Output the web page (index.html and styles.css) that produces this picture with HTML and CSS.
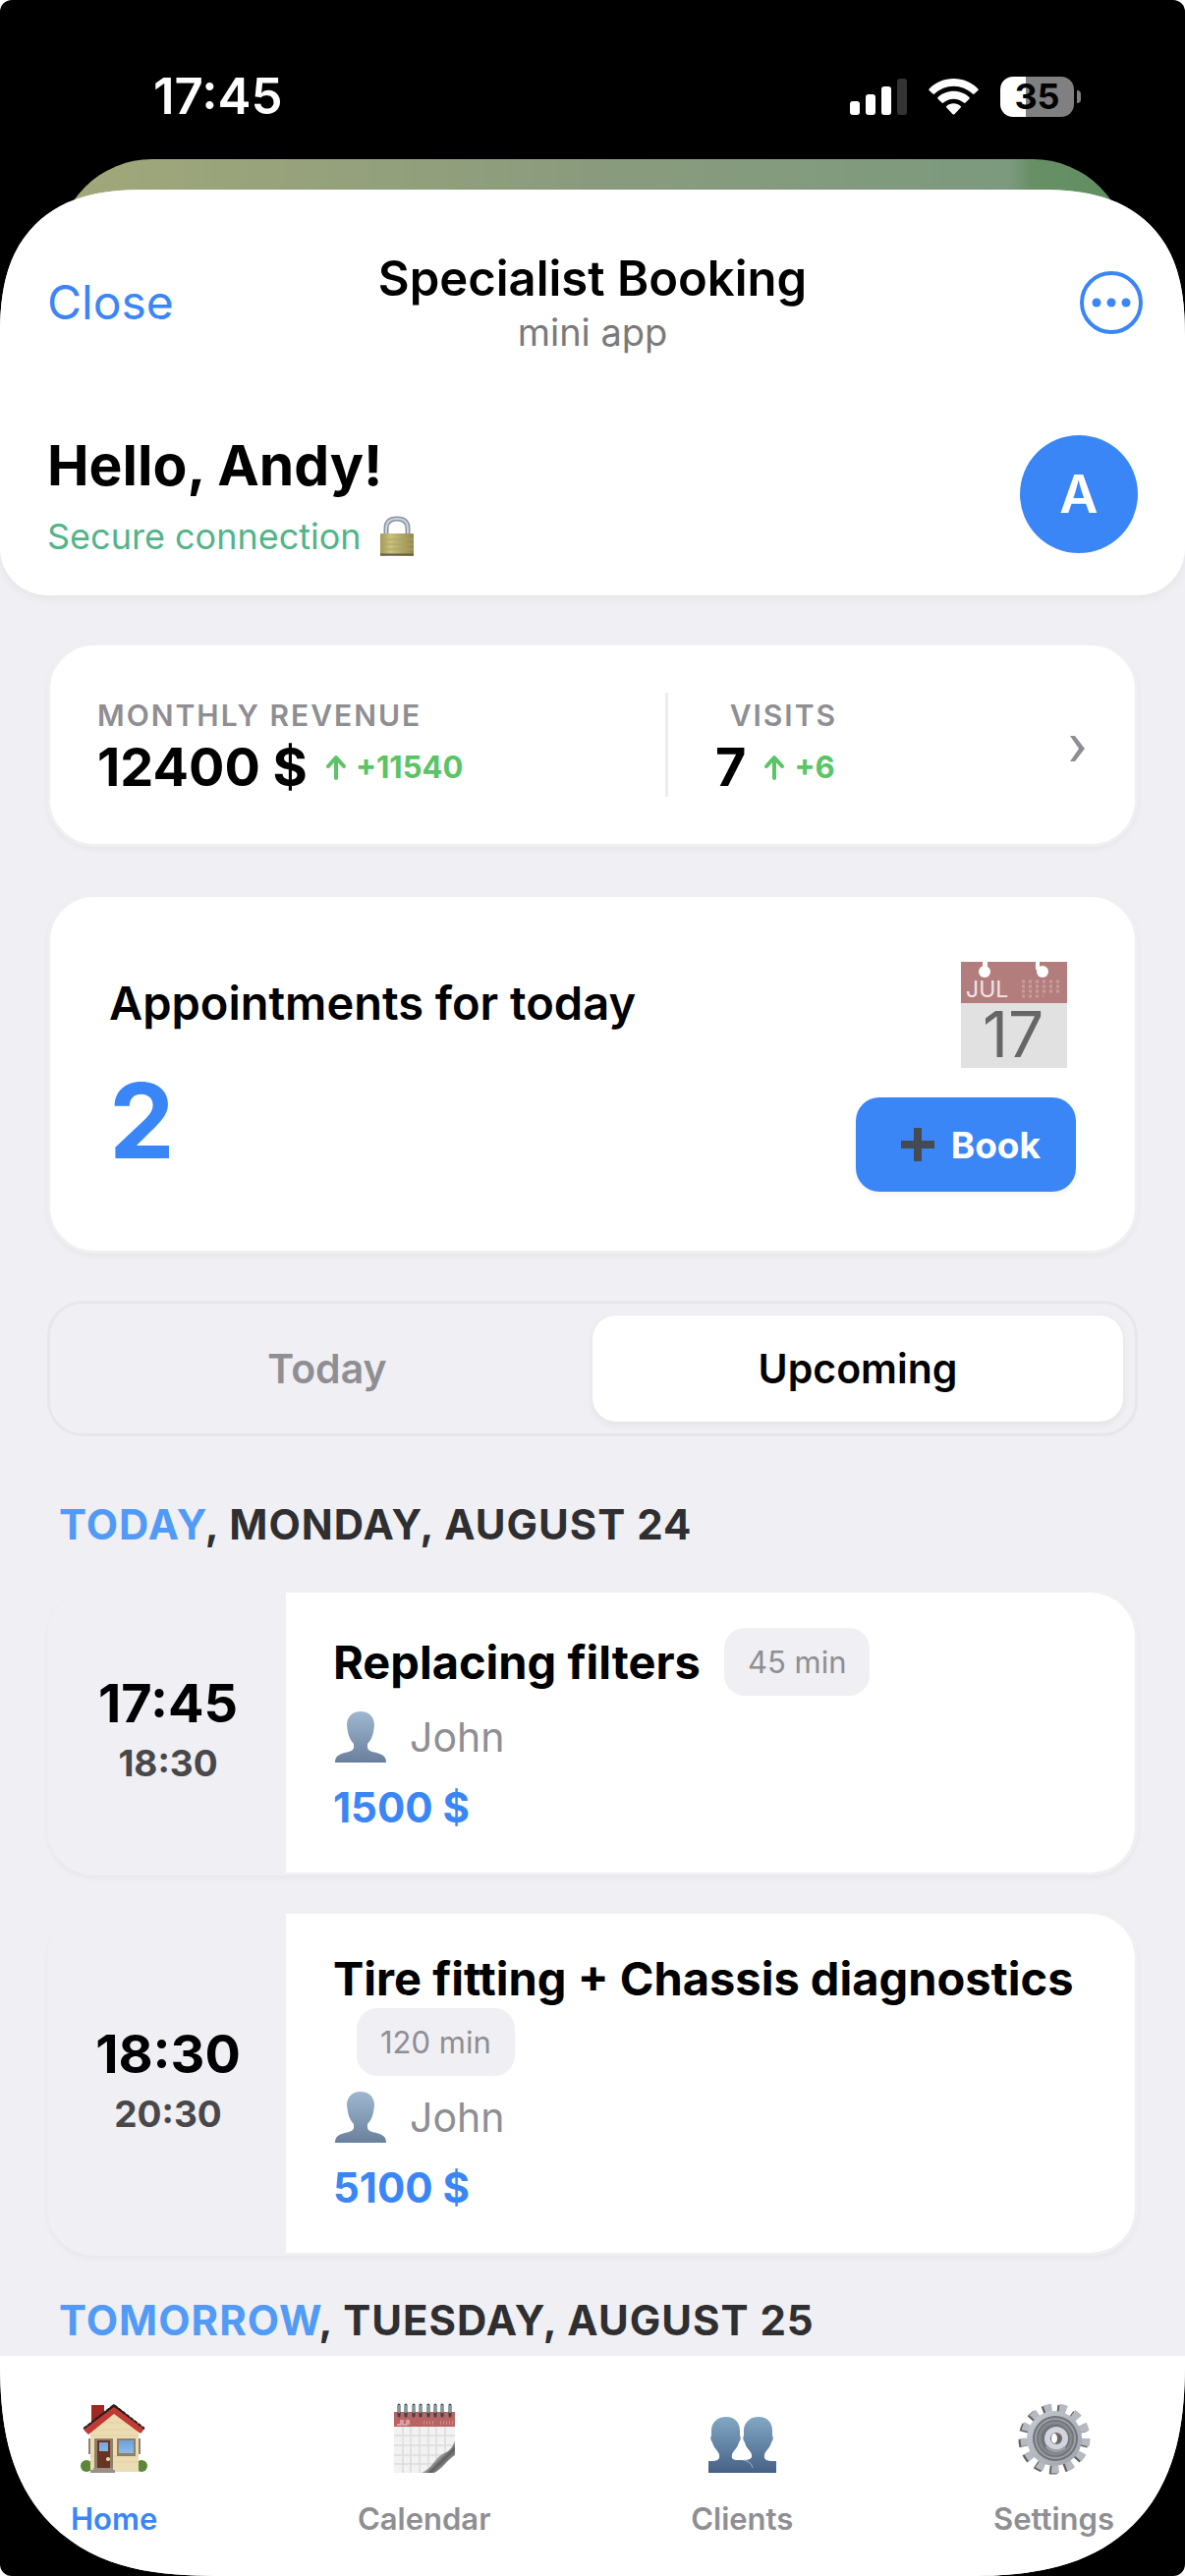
FILE: index.html
```html
<!DOCTYPE html>
<html lang="en">
<head>
<meta charset="utf-8">
<meta name="viewport" content="width=device-width, initial-scale=1">
<title>Specialist Booking</title>
<link rel="stylesheet" href="styles.css">
</head>
<body>
<!-- Shared icon definitions -->
<svg class="defs" width="0" height="0" aria-hidden="true">
  <defs>
    <linearGradient id="bust-fill" x1="0" y1="0" x2="0" y2="1">
      <stop offset="0" stop-color="#9fb8d0"/><stop offset="1" stop-color="#6a7f9c"/>
    </linearGradient>
    <linearGradient id="busts-fill" gradientUnits="userSpaceOnUse" x1="0" y1="14" x2="0" y2="72">
      <stop offset="0" stop-color="#82a8c4"/><stop offset="1" stop-color="#455f85"/>
    </linearGradient>
    <linearGradient id="brass" x1="0" y1="0" x2="1" y2="0">
      <stop offset="0" stop-color="#a29a58"/><stop offset=".3" stop-color="#c9c17c"/><stop offset="1" stop-color="#958b50"/>
    </linearGradient>
    <linearGradient id="steel" x1="0" y1="0" x2="1" y2="1">
      <stop offset="0" stop-color="#c5c9d2"/><stop offset="1" stop-color="#9fa2a8"/>
    </linearGradient>
    <linearGradient id="glass" x1="0" y1="0" x2="0" y2="1">
      <stop offset="0" stop-color="#6fa0da"/><stop offset="1" stop-color="#8bbcea"/>
    </linearGradient>
    <linearGradient id="curl" x1="0" y1="0" x2="1" y2="1">
      <stop offset="0" stop-color="#fafafa"/><stop offset=".45" stop-color="#d5d5d5"/><stop offset=".62" stop-color="#5e5e5e"/><stop offset="1" stop-color="#ffffff"/>
    </linearGradient>
    <symbol id="bust" viewBox="0 0 54 54">
      <path fill="url(#bust-fill)" d="M27 1c9 0 14 6 14 14l-1 7c-1 5-3 9-6 12v4c1 3 4 4 9 5 7 2 10 4 10 10H1c0-6 3-8 10-10 5-1 8-2 9-5v-4c-3-3-5-7-6-12l-1-7C13 7 18 1 27 1z"/>
    </symbol>
  </defs>
</svg>

<div class="phone">
  <div class="status">
    <time class="status__time">17:45</time>
    <div class="status__icons">
      <svg width="58" height="37" viewBox="0 0 58 37" aria-label="Signal">
        <g fill="#fff"><rect y="23" width="10" height="14" rx="3"/><rect x="16" y="16" width="10" height="21" rx="3"/><rect x="32" y="8" width="10" height="29" rx="3"/></g>
        <rect x="48" width="10" height="37" rx="3" fill="#333"/>
      </svg>
      <svg width="51" height="37" viewBox="0 0 51 37" aria-label="Wi-Fi" fill="#fff">
        <path d="M25.500 0C35 0 44 4 50.400 10.400q.800.800 0 1.600L46.500 15.600q-.800.800-1.600 0C39.500 10.600 32.800 7.800 25.500 7.800S11.500 10.600 6.100 15.600q-.800.800-1.600 0L.600 12q-.800-.800 0-1.600C7 4 16 0 25.500 0z"/>
        <path d="M25.500 12.800c6.200 0 11.700 2.300 15.900 6.200q.900.800 0 1.700l-3.900 3.900q-.800.800-1.700 0a15.400 15.400 0 0 0-20.600 0q-.900.800-1.700 0L9.600 20.700q-.900-.900 0-1.700c4.200-3.900 9.700-6.200 15.900-6.200z"/>
        <path d="M25.500 25.300c2.700 0 5.200 1 7.100 2.600q1 .800.100 1.700l-6.300 6.700q-.900.900-1.800 0l-6.300-6.700q-.900-.900.100-1.700c1.900-1.600 4.400-2.600 7.100-2.600z"/>
      </svg>
      <span class="battery"><span class="battery__body">35</span><span class="battery__tip"></span></span>
    </div>
  </div>
  <div class="backdrop"></div>

  <div class="sheet">
    <header class="header">
      <div class="topbar">
        <button class="topbar__close" type="button">Close</button>
        <div class="topbar__titles">
          <h1 class="topbar__title">Specialist Booking</h1>
          <p class="topbar__subtitle">mini app</p>
        </div>
        <button class="topbar__more" type="button" aria-label="More">
          <svg width="66" height="66" viewBox="0 0 66 66"><circle cx="33" cy="33" r="30" fill="none" stroke="#3b86f7" stroke-width="4"/><g fill="#3b86f7"><circle cx="18" cy="33" r="4.500"/><circle cx="33" cy="33" r="4.500"/><circle cx="48" cy="33" r="4.500"/></g></svg>
        </button>
      </div>
      <div class="greeting">
        <div>
          <h2 class="greeting__title">Hello, Andy!</h2>
          <p class="greeting__secure">Secure connection
            <svg width="36" height="42" viewBox="0 0 36 42" aria-hidden="true"><path d="M7 20V13C7 6 11 3 18 3s11 3 11 10v7" fill="none" stroke="#8b93a3" stroke-width="5"/><path d="M7 20V13C7 6 11 3 18 3s11 3 11 10v7" fill="none" stroke="#cdd3de" stroke-width="2"/><rect x="1" y="18" width="34" height="23" rx="1" fill="url(#brass)"/><path d="M1 24h34M1 29h34M1 34h34" stroke="#aaa161" stroke-width="1"/><path d="M1 39.500h34" stroke="#655f3c" stroke-width="2"/></svg>
          </p>
        </div>
        <span class="avatar">A</span>
      </div>
    </header>

    <main class="content">
      <a class="card stats" href="#stats">
        <span class="stat">
          <span class="stat__label">MONTHLY REVENUE</span>
          <span class="stat__line"><b class="stat__value">12400 $</b><span class="stat__delta"><svg width="22" height="24" viewBox="0 0 22 24"><path d="M11 23V3M3 11l8-9 8 9"/></svg>+11540</span></span>
        </span>
        <span class="stat stat--visits">
          <span class="stat__label">VISITS</span>
          <span class="stat__line"><b class="stat__value">7</b><span class="stat__delta"><svg width="22" height="24" viewBox="0 0 22 24"><path d="M11 23V3M3 11l8-9 8 9"/></svg>+6</span></span>
        </span>
        <svg class="stats__arrow" width="20" height="28" viewBox="0 0 20 28" aria-hidden="true"><path fill="#8e8e93" d="M2 1h5l10 13L7 27H2l9-13z"/></svg>
      </a>

      <section class="card today">
        <div class="today__info">
          <h2 class="today__title">Appointments for today</h2>
          <p class="today__count">2</p>
        </div>
        <div class="today__side">
          <svg class="today__calendar" width="108" height="108" viewBox="0 0 108 108" aria-hidden="true">
            <path fill="#b37d7d" d="M0 0h108v42H0z"/><path fill="#e1e1e1" d="M0 42h108v66H0z"/>
            <g fill="#fff"><circle cx="24" cy="10" r="6"/><circle cx="83" cy="10" r="6"/><path d="M22 0h5v8h-5zM76 0h4v8h-4z"/></g>
            <text x="5" y="36" class="cal-month">JUL</text>
            <path d="M62 20h42M62 25h42M62 30h42M62 35h22" stroke="#c99c9c" stroke-width="3" stroke-dasharray="3 4" fill="none"/>
            <text x="53" y="97" text-anchor="middle" class="cal-day">17</text>
          </svg>
          <button class="book" type="button">
            <svg width="36" height="36" viewBox="0 0 36 36" aria-hidden="true"><path d="M18 1v34M1 18h34" stroke="#464b53" stroke-width="8"/></svg>Book
          </button>
        </div>
      </section>

      <div class="tabs" role="tablist">
        <button class="tabs__item" type="button" role="tab" aria-selected="false">Today</button>
        <button class="tabs__item tabs__item--active" type="button" role="tab" aria-selected="true">Upcoming</button>
      </div>

      <section class="day day--first">
        <h2 class="day__title"><span>TODAY</span>, MONDAY, AUGUST 24</h2>
        <article class="visit">
          <div class="visit__time"><time class="visit__start">17:45</time><time class="visit__end">18:30</time></div>
          <div class="visit__body">
            <div class="visit__head"><h3 class="visit__title">Replacing filters</h3><span class="badge">45 min</span></div>
            <p class="visit__client"><svg width="56" height="54" aria-hidden="true"><use href="#bust"/></svg>John</p>
            <p class="visit__price">1500 $</p>
          </div>
        </article>
        <article class="visit">
          <div class="visit__time"><time class="visit__start">18:30</time><time class="visit__end">20:30</time></div>
          <div class="visit__body">
            <div class="visit__head"><h3 class="visit__title">Tire fitting + Chassis diagnostics</h3><span class="badge">120 min</span></div>
            <p class="visit__client"><svg width="56" height="54" aria-hidden="true"><use href="#bust"/></svg>John</p>
            <p class="visit__price">5100 $</p>
          </div>
        </article>
      </section>

      <section class="day">
        <h2 class="day__title"><span>TOMORROW</span>, TUESDAY, AUGUST 25</h2>
      </section>
    </main>

    <nav class="nav">
      <a class="nav__item nav__item--active" href="#home">
        <svg width="72" height="72" viewBox="0 0 72 72" aria-hidden="true">
          <circle cx="8" cy="64" r="6" fill="#5d8638"/><circle cx="64" cy="64" r="6" fill="#5d8638"/>
          <path fill="#8b8272" d="M10 36h4v16h-4zM59 36h4v16h-4z"/>
          <path fill="#a02823" d="M13 2h13v20H13z"/>
          <path fill="#ecdcb3" d="M12 25 36 6l25 19v45H12z"/>
          <path stroke="#e2d1a7" d="M22 20h28M15 27h43M12 33h49M12 54h49M12 60h49"/>
          <path fill="#26211f" d="M6 25 36 1l31 25-4 4L36 8 8 28z"/>
          <path fill="#c23a34" d="M5 27 36 4l31 22-4 5-27-20L10 32z"/>
          <path fill="none" stroke="#26211f" stroke-width="2" stroke-dasharray="4 1" d="M5 26 36 2l31 24"/>
          <path fill="#8f7f67" d="M16 36h19v32H16zM39 36h19v18H39z"/>
          <path fill="#6a3424" d="M19 38h13v28H19z"/>
          <path fill="url(#glass)" d="M21 40h9v9h-9zM41 38h15v13H41z"/>
          <circle cx="30" cy="57" r="2" fill="#f3dfb0"/><path fill="#999087" d="M15 66h20v2h2v3H12v-3h3z"/>
        </svg>
        Home
      </a>
      <a class="nav__item" href="#calendar">
        <svg width="72" height="72" viewBox="0 0 72 72" aria-hidden="true">
          <path fill="#f2f2f2" d="M5 24h62v47H5z"/>
          <path stroke="#dcdcdc" stroke-width="1.500" d="M5 33h62M5 43h62M5 53h62M5 62h62M14 24v47M22 24v47M31 24v47M40 24v47M48 24v47M57 24v47"/>
          <path fill="#b96363" d="M5 9h62v15H5z"/>
          <path stroke="#e2b5b5" stroke-width="1.500" fill="none" d="M8 22h4v-5M14 17v5h4v-5M20 17v5"/>
          <path stroke="#cd8c8c" stroke-width="4" stroke-dasharray="1 2" d="M35 20h12M52 20h13"/>
          <path fill="url(#curl)" d="M33 71C45 66 47 54 56 51c6-2 9-7 11-13v33z"/><path fill="#fff" d="M46 71c8-4 12-12 21-18v18z"/>
          <path stroke="#36464a" stroke-width="3" stroke-linecap="round" d="M10 2v11M17 2v11M25 2v11M32 2v11M40 2v11M47 2v11M54 2v11M62 2v11"/>
          <path stroke="#d8e3e6" stroke-width="1" d="M10 2v8M17 2v8M25 2v8M32 2v8M40 2v8M47 2v8M54 2v8M62 2v8"/>
        </svg>
        Calendar
      </a>
      <a class="nav__item" href="#clients">
        <svg width="72" height="72" viewBox="0 0 72 72" aria-hidden="true" fill="url(#busts-fill)">
          <path d="M20 14c9 0 14 6 14 14v5q2 3-1 7c-1 6-7 9-7 13-1 4 2 5 7 5 8 0 10 2 14 5v8H2V59c8 0 12-1 11-6 0-4-6-7-7-13q-3-4-1-7v-5c0-8 6-14 15-14z"/>
          <path d="M53 14c9 0 14 6 14 14v5q2 3-1 7c-1 6-7 9-7 13-1 5 3 6 12 6v12H42l5-7c-3-4-7-5-12-6 8 0 12-1 11-5 0-4-6-7-7-13q-3-4-1-7v-5c0-8 6-14 15-14z"/>
          <path d="M38 58c5 1 8 4 9 8" fill="none" stroke="#a4b9cf" stroke-width="1"/>
        </svg>
        Clients
      </a>
      <a class="nav__item" href="#settings">
        <svg width="72" height="72" viewBox="0 0 72 72" aria-hidden="true" fill="none">
          <circle cx="35" cy="37" r="31" stroke="#62605f" stroke-width="9" stroke-dasharray="7.500 7.483"/>
          <circle cx="37" cy="36" r="31" stroke="#b4b9c2" stroke-width="9" stroke-dasharray="7.500 7.483"/>
          <circle cx="36" cy="36" r="28" fill="url(#steel)"/>
          <circle cx="37" cy="36" r="23" fill="#70747a"/>
          <circle cx="37" cy="36" r="20" stroke="#9ca0a5" stroke-width="2"/>
          <circle cx="37" cy="36" r="16" stroke="#85888d" stroke-width="3"/>
          <circle cx="38" cy="36" r="12" fill="#d0d4dc"/>
          <path d="M28 44a13 13 0 0 0 19 1" stroke="#9b9fa8" stroke-width="3"/>
          <circle cx="38" cy="36" r="6" fill="#6d6a69"/><ellipse cx="36" cy="36" rx="3" ry="5" fill="#fff"/>
        </svg>
        Settings
      </a>
    </nav>
  </div>
</div>
</body>
</html>
```
FILE: styles.css
```css
:root {
  --blue: #3b86f7;
  --page: #efeff4;
  --muted: #8e8e93;
  --line: #ededf0;
}

* { box-sizing: border-box; }

html { background: #fff; }

body {
  margin: 0;
  font-family: Inter, "Liberation Sans", sans-serif;
  color: #000;
}

h1, h2, h3, p { margin: 0; }
button { border: 0; background: none; padding: 0; font: inherit; color: inherit; cursor: pointer; }
a { color: inherit; text-decoration: none; }
svg { display: block; flex: none; overflow: visible; }
.defs { position: absolute; }

.phone {
  min-height: 100vh;
  display: flex;
  flex-direction: column;
  background: #000;
  border-radius: 12px;
  overflow: hidden;
}

/* Status bar */
.status {
  height: 162px;
  padding: 34px 106px 0 156px;
  display: flex;
  align-items: center;
  justify-content: space-between;
  color: #fff;
}
.status__time { font-size: 51px; font-weight: 600; line-height: 60px; }
.status__icons { display: flex; align-items: center; gap: 22px; }
.battery { display: flex; align-items: center; gap: 3px; }
.battery__body {
  width: 75px;
  height: 41px;
  border-radius: 13px;
  background: linear-gradient(90deg, #fff 35%, #808080 35%);
  color: #000;
  font-size: 36px;
  font-weight: 700;
  line-height: 41px;
  text-align: center;
}
.battery__tip { width: 4px; height: 13px; border-radius: 0 4px 4px 0; background: #808080; }

/* App card behind the sheet */
.backdrop {
  height: 100px;
  margin: 0 58px -69px;
  border-radius: 97px 97px 0 0;
  background: linear-gradient(90deg, #a1a87a, #8a9b7d 50%, #7c9a7e 89%, #688f66 91%, #5f8e60);
}

/* Sheet */
.sheet {
  position: relative;
  flex: 1;
  display: flex;
  flex-direction: column;
  background: var(--page);
  border-radius: 118px 118px 181px 181px;
  overflow: hidden;
}
@supports (corner-shape: superellipse(2)) {
  .sheet {
    border-radius: 150px 150px 220px 220px;
    corner-shape: superellipse(1.35);
  }
}

.header {
  padding: 61px 48px 38px;
  background: #fff;
  border-radius: 0 0 48px 48px;
  box-shadow: 0 3px 12px rgba(0, 0, 0, .05);
}
.topbar {
  display: grid;
  grid-template-columns: 1fr auto 1fr;
  align-items: center;
}
.topbar__close { justify-self: start; font-size: 48px; line-height: 60px; color: var(--blue); }
.topbar__titles { text-align: center; }
.topbar__title { font-size: 49px; font-weight: 600; line-height: 60px; }
.topbar__subtitle { font-size: 38px; line-height: 48px; color: #7a7a7a; }
.topbar__more { justify-self: end; margin-right: -6px; }

.greeting {
  margin-top: 76px;
  display: flex;
  align-items: center;
  justify-content: space-between;
}
.greeting__title { font-size: 57px; font-weight: 700; line-height: 72px; }
.greeting__secure {
  margin-top: 14px;
  display: flex;
  align-items: center;
  gap: 18px;
  font-size: 36px;
  line-height: 44px;
  color: #52b488;
}
.avatar {
  width: 120px;
  height: 120px;
  border-radius: 50%;
  background: var(--blue);
  color: #fff;
  font-size: 54px;
  font-weight: 600;
  line-height: 120px;
  text-align: center;
}

/* Content */
.content { padding: 48px 48px 6px; }

.card {
  margin-bottom: 48px;
  background: #fff;
  border: 3px solid #f0f0f2;
  border-radius: 48px;
  box-shadow: 0 3px 6px rgba(0, 0, 0, .04);
}

.stats {
  padding: 48px;
  display: grid;
  grid-template-columns: 117fr 83fr auto;
  align-items: center;
}
.stat { display: flex; flex-direction: column; align-items: flex-start; }
.stat--visits { padding-left: 48px; border-left: 3px solid var(--line); }
.stat--visits .stat__label { width: 124px; text-align: right; }
.stat__label { font-size: 30px; font-weight: 600; line-height: 46px; letter-spacing: 2px; color: var(--muted); }
.stat__line { display: flex; align-items: center; gap: 18px; }
.stat__value { font-size: 54px; font-weight: 700; line-height: 60px; }
.stat__delta { display: flex; align-items: center; gap: 9px; font-size: 31px; font-weight: 700; line-height: 60px; color: #5ac466; }
.stat__delta path { fill: none; stroke: currentColor; stroke-width: 4; stroke-linecap: round; stroke-linejoin: round; }
.stats__arrow { margin-top: 8px; }

.today {
  padding: 60px;
  display: flex;
  align-items: center;
  justify-content: space-between;
}
.today__info { padding-top: 6px; }
.today__title { font-size: 47px; font-weight: 600; line-height: 60px; }
.today__count { margin-top: 30px; font-size: 106px; font-weight: 700; line-height: 120px; color: var(--blue); }
.today__side { display: flex; flex-direction: column; align-items: flex-end; }
.today__calendar { margin: 6px 9px 30px 0; }
.cal-month { font-size: 23px; fill: #f1e6e6; }
.cal-day { font-size: 64px; fill: #666; }
.book {
  height: 96px;
  padding: 0 36px 0 45px;
  display: flex;
  align-items: center;
  gap: 16px;
  border-radius: 24px;
  background: var(--blue);
  box-shadow: 0 3px 6px rgba(0, 0, 0, .05);
  color: #fff;
  font-size: 37px;
  font-weight: 700;
}

.tabs {
  padding: 12px;
  display: grid;
  grid-template-columns: 1fr 1fr;
  border: 3px solid #e7e7eb;
  border-radius: 36px;
}
.tabs__item {
  height: 108px;
  border-radius: 24px;
  font-size: 41px;
  font-weight: 600;
  color: var(--muted);
}
.tabs__item--active { background: #fff; color: #000; box-shadow: 0 3px 9px rgba(0, 0, 0, .06); }

.day { padding-top: 36px; }
.day--first { padding-top: 60px; }
.day__title {
  padding: 0 12px;
  font-size: 42px;
  font-weight: 700;
  line-height: 60px;
  letter-spacing: 1px;
  color: #2f2f31;
}
.day__title span { color: #519bf7; }

.visit {
  margin-top: 36px;
  display: flex;
  background: #fff;
  background-clip: padding-box;
  border: 3px solid #f0f0f2;
  border-radius: 48px;
  box-shadow: 0 3px 6px rgba(0, 0, 0, .04);
  overflow: hidden;
}
.visit__time {
  flex: none;
  width: 240px;
  padding-bottom: 8px;
  display: flex;
  flex-direction: column;
  align-items: center;
  justify-content: center;
  background: var(--page);
}
.visit__start { font-size: 54px; font-weight: 700; line-height: 66px; }
.visit__end { margin-top: 4px; font-size: 37px; font-weight: 700; line-height: 48px; color: #48484a; }
.visit__body { flex: 1; padding: 36px 48px; }
.visit__head { display: flex; flex-wrap: wrap; align-items: center; }
.visit__title { font-size: 47px; font-weight: 700; line-height: 60px; }
.badge {
  margin-left: 24px;
  padding: 0 24px;
  border-radius: 21px;
  background: var(--page);
  font-size: 31px;
  line-height: 69px;
  color: var(--muted);
}
.visit__client {
  margin-top: 12px;
  display: flex;
  align-items: center;
  gap: 22px;
  font-size: 41px;
  line-height: 60px;
  color: var(--muted);
}
.visit__price { margin-top: 12px; font-size: 42px; font-weight: 700; line-height: 60px; color: var(--blue); }

/* Bottom navigation */
.nav {
  margin-top: auto;
  padding: 48px 72px 40px;
  display: flex;
  justify-content: space-between;
  background: #fff;
}
.nav__item {
  display: flex;
  flex-direction: column;
  align-items: center;
  gap: 28px;
  font-size: 31px;
  font-weight: 600;
  line-height: 36px;
  color: var(--muted);
}
.nav__item--active { color: var(--blue); }
```
